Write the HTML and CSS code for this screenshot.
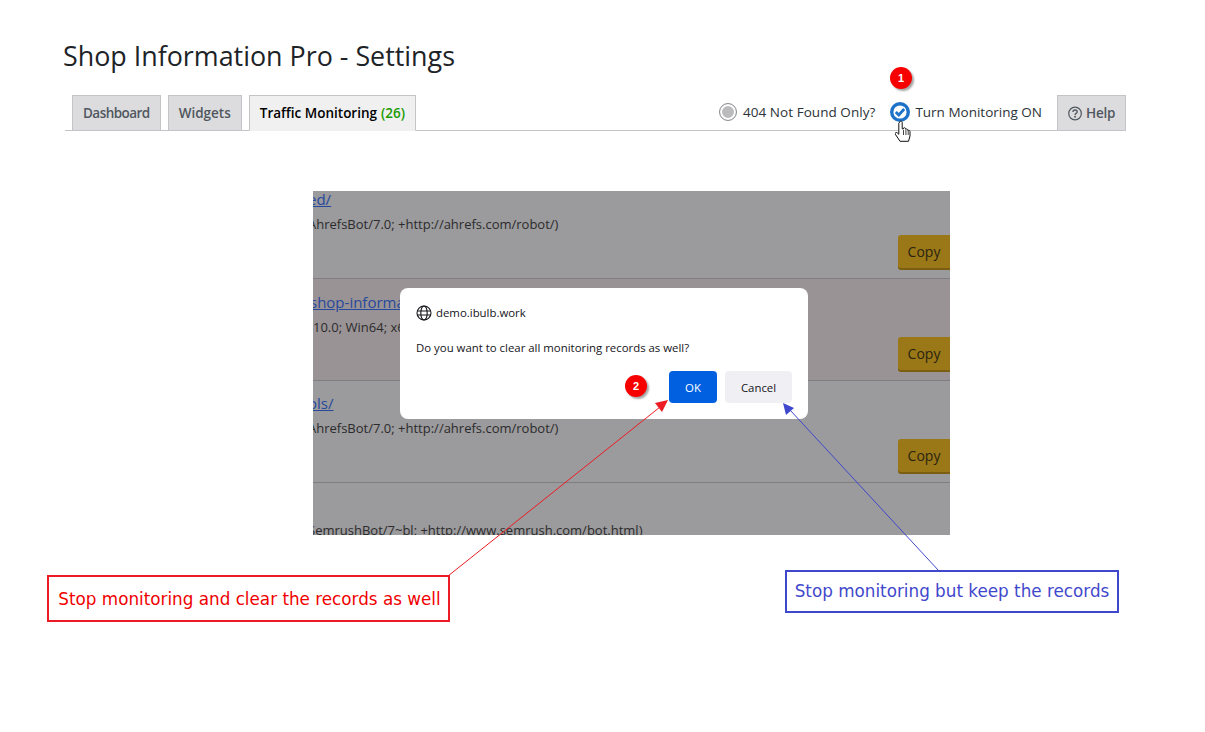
FILE: index.html
```html
<!DOCTYPE html>
<html>
<head>
    <title>Shop Information Pro - Settings</title>
    <link rel="stylesheet" href="styles.css">
</head>
<body>
    <h1 class="page-title">Shop Information Pro - Settings</h1>

    <div class="tab-bar">
        <a class="tab tab-dashboard">Dashboard</a>
        <a class="tab">Widgets</a>
        <a class="tab tab-active">Traffic Monitoring <span class="tab-count">(26)</span></a>

        <div class="tab-tools">
            <span class="tool tool-404">
                <span class="radio-off"></span>
                404 Not Found Only?
            </span>
            <span class="tool tool-monitor">
                <svg class="check-icon" width="20" height="20" viewBox="0 0 20 20">
                    <circle cx="10" cy="10" r="8.300" fill="#fff" stroke="#1e73c8" stroke-width="3.400"/>
                    <path d="M5.800 10l3 3 5.400-6" fill="none" stroke="#1e73c8" stroke-width="2.800"/>
                </svg>
                Turn Monitoring ON
            </span>
            <a class="tab tab-help">
                <svg width="15" height="15" viewBox="0 0 15 15">
                    <circle cx="7.500" cy="7.500" r="6.700" fill="none" stroke="#50575e" stroke-width="1.300"/>
                    <path d="M5.300 5.900c0-2.900 4.500-2.800 4.500-.1 0 1.600-2.300 1.600-2.300 3.200" fill="none" stroke="#50575e" stroke-width="1.400"/>
                    <circle cx="7.500" cy="11" r="1" fill="#50575e"/>
                </svg>
                Help
            </a>
        </div>
    </div>

    <div class="shot">
        <div class="shot-row shot-row-first">
            <a class="shot-link shot-link-1">ed/</a>
            <p class="shot-agent shot-agent-1">AhrefsBot/7.0; +http://ahrefs.com/robot/)</p>
            <button class="copy-btn">Copy</button>
        </div>
        <div class="shot-row shot-row-pink">
            <a class="shot-link shot-link-2">shop-information</a>
            <p class="shot-agent shot-agent-2">10.0; Win64; x64</p>
            <button class="copy-btn">Copy</button>
        </div>
        <div class="shot-row">
            <a class="shot-link shot-link-3">ols/</a>
            <p class="shot-agent shot-agent-1">AhrefsBot/7.0; +http://ahrefs.com/robot/)</p>
            <button class="copy-btn">Copy</button>
        </div>
        <div class="shot-row">
            <p class="shot-agent shot-agent-4">SemrushBot/7~bl; +http://www.semrush.com/bot.html)</p>
        </div>

        <div class="dialog">
            <div class="dialog-host">
                <svg width="16" height="16" viewBox="0 0 16 16" fill="none" stroke="#15141a" stroke-width="1.100">
                    <circle cx="8" cy="8" r="7"/>
                    <ellipse cx="8" cy="8" rx="3.200" ry="7"/>
                    <path d="M1 6h14M1 10h14"/>
                </svg>
                demo.ibulb.work
            </div>
            <p class="dialog-text">Do you want to clear all monitoring records as well?</p>
            <div class="dialog-actions">
                <span class="badge badge-inline">2</span>
                <button class="dialog-btn dialog-ok">OK</button>
                <button class="dialog-btn dialog-cancel">Cancel</button>
            </div>
        </div>
    </div>

    <!-- annotations drawn on top of the screenshot -->
    <span class="badge badge-one">1</span>

    <svg class="hand-cursor" width="18" height="24" viewBox="0 0 18 24">
        <path d="M5 1.500c1-.8 2.200-.3 2.200 1v6.300l1.300.1v-.8c.8-.7 1.900-.4 2.100.6l.1.6c.8-.6 1.800-.3 2 .6l.1.5c1-.5 2 0 2.200 1.100v4.500l-1.500 5.300h-8.500l-4.700-7.100c-.6-1.300.8-2.300 1.900-1.400l1.600 1.500v-11z" fill="#fff" stroke="#111" stroke-width="1"/>
        <path d="M8.500 10v5M10.900 10v5M13.200 10.500v4.500" stroke="#111" stroke-width=".8"/>
    </svg>

    <svg class="arrows" width="1205" height="732" viewBox="0 0 1205 732">
        <line x1="448" y1="576" x2="660" y2="407" stroke="#ed1c24"/>
        <polygon points="668,400 662,412 655,403" fill="#ed1c24"/>
        <line x1="939" y1="571" x2="790" y2="410" stroke="#3f48cc"/>
        <polygon points="783,403 794,408 786,415" fill="#3f48cc"/>
    </svg>

    <div class="note note-red">Stop monitoring and clear the records as well</div>
    <div class="note note-blue">Stop monitoring but keep the records</div>
</body>
</html>
```

FILE: styles.css
```css
html, body {
    height: 732px;
    overflow: hidden;
}

body {
    position: relative;
    margin: 0;
    font-family: "Open Sans", "Noto Sans", sans-serif;
    background-color: #fff;
    color: #1d2327;
}

.page-title {
    margin: 0;
    padding: 37px 0 0 63px;
    height: 57px;
    box-sizing: border-box;
    font-size: 26.850px;
    line-height: 38px;
    font-weight: 400;
    white-space: nowrap;
}

.tab-bar {
    display: flex;
    align-items: flex-end;
    gap: 7px;
    box-sizing: border-box;
    width: 1061px;
    height: 36px;
    margin: 38px 0 0 65px;
    padding: 0 0 0 7px;
    border-bottom: 1px solid #c3c4c7;
}

.tab {
    display: flex;
    align-items: center;
    justify-content: center;
    gap: 4px;
    box-sizing: border-box;
    height: 36px;
    margin-bottom: -1px;
    padding: 0 10px;
    border: 1px solid #c3c4c7;
    background-color: #dcdcde;
    color: #50575e;
    font-size: 13.500px;
    font-weight: 600;
    white-space: nowrap;
}

.tab-dashboard {
    letter-spacing: -.55px;
}

.tab-active {
    background-color: #f0f0f1;
    border-bottom-color: #f0f0f1;
    color: #000;
}

.tab-count {
    color: #1a9a00;
}

.tab-tools {
    display: flex;
    align-items: center;
    margin-left: auto;
    height: 35px;
}

.tool {
    display: flex;
    align-items: center;
    font-size: 13.500px;
    color: #2c3338;
    margin-right: 15px;
    white-space: nowrap;
    padding-bottom: 1px;
}

.tool-404 {
    gap: 6px;
    letter-spacing: .05px;
}

.tool-monitor {
    gap: 5px;
}

.tab-help {
    width: 69px;
    letter-spacing: -.3px;
}

.radio-off {
    box-sizing: border-box;
    width: 18px;
    height: 18px;
    border-radius: 50%;
    border: 1px solid #8c8f94;
    background-color: #bbb;
    box-shadow: inset 0 0 0 2px #fff;
}

.check-icon {
    display: block;
}

.shot {
    position: relative;
    box-sizing: border-box;
    width: 637px;
    height: 344px;
    margin: 60px 0 0 313px;
    overflow: hidden;
    background-color: #9b9a9c;
}

.shot-row {
    display: flow-root;
    position: relative;
    box-sizing: border-box;
    height: 102px;
    border-bottom: 1px solid #7f7e80;
    font-size: 13px;
}

.shot-row-first {
    height: 88px;
}

.shot-row-pink {
    background-color: #9a9395;
}

.shot-row:last-of-type {
    border-bottom: none;
}

.shot-link {
    display: block;
    color: #27499c;
    text-decoration: underline;
    font-size: 15px;
    line-height: 18px;
    white-space: nowrap;
}

.shot-link-1 {
    margin: -1px 0 0 -5px;
}

.shot-link-2 {
    margin: 14px 0 0 -3px;
}

.shot-link-3 {
    margin: 13px 0 0 -5px;
}

.shot-agent {
    margin: 7px 0 0;
    color: #2b2b2d;
    line-height: 18px;
    white-space: nowrap;
}

.shot-agent-1 {
    margin-left: -5px;
}

.shot-agent-4 {
    margin: 38px 0 0 -5px;
}

.copy-btn {
    position: absolute;
    right: 0;
    bottom: 10px;
    width: 52px;
    height: 33px;
    padding: 0;
    border: none;
    border-radius: 3px 0 0 3px;
    background-color: #9a7818;
    box-shadow: 0 2px 0 #7c5e10;
    color: #2b2410;
    font-family: inherit;
    font-size: 14px;
}

.dialog {
    position: absolute;
    left: 87px;
    top: 97px;
    box-sizing: border-box;
    width: 408px;
    height: 131px;
    padding: 16px 16px 0;
    border-radius: 8px;
    background-color: #fff;
    color: #15141a;
    font-size: 11.400px;
}

.dialog-host {
    display: flex;
    align-items: center;
    gap: 4px;
    height: 17px;
}

.dialog-text {
    margin: 18px 0 0;
    line-height: 17px;
}

.dialog-actions {
    display: flex;
    align-items: center;
    justify-content: flex-end;
    gap: 8px;
    margin-top: 15px;
}

.dialog-btn {
    height: 32px;
    padding: 0;
    border: none;
    border-radius: 4px;
    font-family: inherit;
    font-size: 11.400px;
}

.dialog-ok {
    width: 48px;
    background-color: #0060df;
    color: #fff;
}

.dialog-cancel {
    width: 67px;
    background-color: #f0f0f4;
    color: #15141a;
}

.badge {
    display: flex;
    align-items: center;
    justify-content: center;
    width: 22px;
    height: 22px;
    border-radius: 50%;
    background-color: #f60000;
    box-shadow: 2px 2px 2px rgba(0, 0, 0, .35);
    color: #fff;
    font-family: "Liberation Sans", sans-serif;
    font-size: 11px;
    font-weight: 700;
}

.badge-inline {
    margin-right: 14px;
    margin-top: -3px;
}

.badge-one {
    position: absolute;
    left: 890px;
    top: 67px;
}

.hand-cursor {
    position: absolute;
    left: 895px;
    top: 120px;
}

.arrows {
    position: absolute;
    left: 0;
    top: 0;
    pointer-events: none;
}

.note {
    position: absolute;
    box-sizing: border-box;
    display: flex;
    align-items: center;
    justify-content: center;
    height: 47px;
    border: 2px solid;
    background-color: #fff;
    font-family: "DejaVu Sans", sans-serif;
    font-size: 16.800px;
    white-space: nowrap;
}

.note-red {
    left: 47px;
    top: 575px;
    width: 403px;
    padding-left: 2px;
    border-color: #ed1c24;
    color: #f00000;
}

.note-blue {
    left: 785px;
    top: 570px;
    width: 334px;
    height: 43px;
    padding-bottom: 2px;
    border-color: #3f48cc;
    color: #3f48cc;
}
```
